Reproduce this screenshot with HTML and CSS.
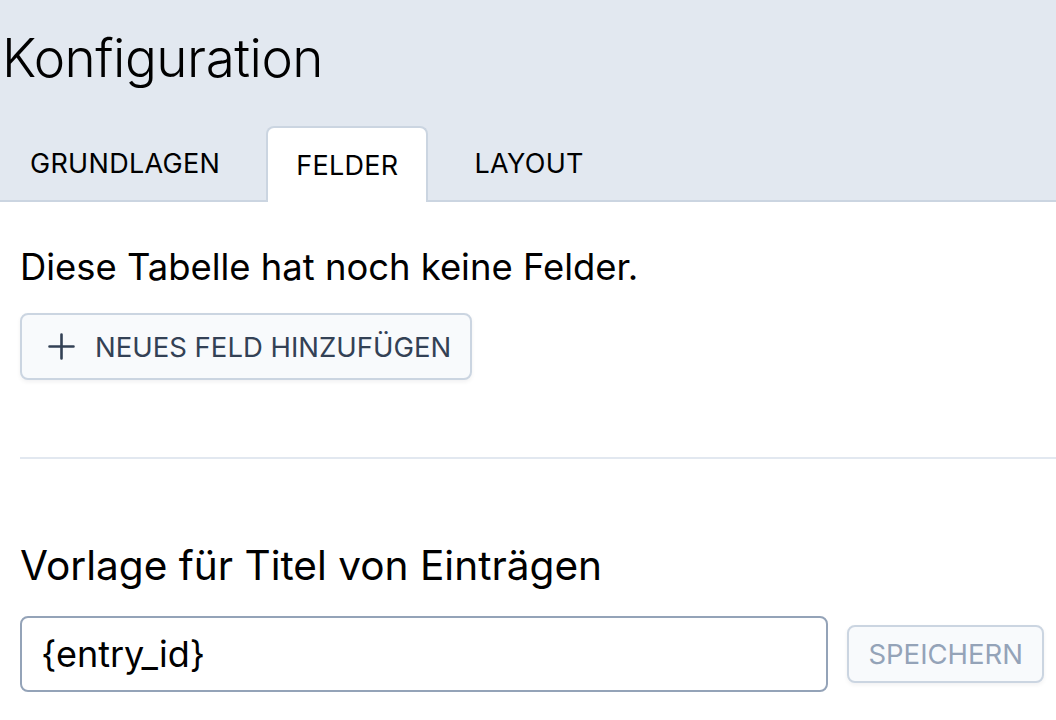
FILE: index.html
```html
<!DOCTYPE html>
<html lang="de">
<head>
<meta charset="utf-8">
<title>Konfiguration</title>
<link rel="stylesheet" href="styles.css">
</head>
<body>
<header class="header">
  <h1 class="title">Konfiguration</h1>
  <nav class="tabs">
    <div class="tab">GRUNDLAGEN</div>
    <div class="tab tab-active">FELDER</div>
    <div class="tab">LAYOUT</div>
  </nav>
</header>
<main class="content">
  <p class="empty">Diese Tabelle hat noch keine Felder.</p>
  <button class="btn btn-add" type="button">
    <svg class="plus" width="27" height="27" viewBox="0 0 27 27" aria-hidden="true">
      <path d="M13.5 1.5V25.5M1.5 13.5H25.5" stroke="#334155" stroke-width="2.6" stroke-linecap="round" fill="none"/>
    </svg>
    <span>NEUES FELD HINZUFÜGEN</span>
  </button>
  <hr class="divider">
  <h2 class="heading">Vorlage für Titel von Einträgen</h2>
  <div class="row">
    <input class="input" type="text" value="{entry_id}">
    <button class="btn btn-save" type="button" disabled>SPEICHERN</button>
  </div>
</main>
</body>
</html>
```

FILE: styles.css
```css
* { box-sizing: border-box; }

html, body {
  margin: 0;
  padding: 0;
  background: #ffffff;
  font-family: Inter, "Noto Sans", "Liberation Sans", sans-serif;
  color: #000000;
}

.header {
  background: #e2e8f0;
  border-bottom: 2px solid #cbd5e1;
  padding-top: 25px;
}

.title {
  margin: 0 0 0 2px;
  font-size: 53px;
  font-weight: 300;
  line-height: 66px;
  letter-spacing: -0.5px;
}

.tabs {
  display: flex;
  align-items: flex-end;
  gap: 16px;
  margin-top: 35px;
  height: 74px;
}

.tab {
  height: 74px;
  padding: 0 30px;
  display: flex;
  align-items: center;
  font-size: 27px;
  font-weight: 400;
  color: #000000;
  letter-spacing: 0.3px;
}

.tab-active {
  height: 76px;
  margin-bottom: -2px;
  padding: 0 28px;
  background: #ffffff;
  border: 2px solid #cbd5e1;
  border-bottom: none;
  border-radius: 8px 8px 0 0;
}

.content {
  padding: 0 0 0 20px;
}

.empty {
  margin: 38px 0 0 0;
  font-size: 36.4px;
  line-height: 54px;
}

.btn {
  font-family: Inter, "Noto Sans", "Liberation Sans", sans-serif;
  border: 2px solid #cbd5e1;
  background: #f8fafc;
  border-radius: 8px;
  box-shadow: 0 2px 4px rgba(15, 23, 42, 0.06);
  cursor: pointer;
}

.btn-add {
  margin-top: 19px;
  height: 67px;
  display: flex;
  align-items: center;
  gap: 20px;
  padding: 0 19px 0 26px;
  font-size: 27.5px;
  color: #334155;
}

.plus { display: block; flex: none; }

.divider {
  margin: 77px 0 0 0;
  border: none;
  height: 2px;
  background: #e2e8f0;
}

.heading {
  margin: 83px 0 0 0;
  font-size: 40.6px;
  font-weight: 400;
  line-height: 48px;
}

.row {
  display: flex;
  align-items: center;
  gap: 19px;
  margin-top: 26px;
  margin-right: 12px;
}

.input {
  flex: 1;
  height: 76px;
  border: 2px solid #94a3b8;
  border-radius: 8px;
  padding: 0 19px;
  font-family: Inter, "Noto Sans", "Liberation Sans", sans-serif;
  font-size: 36px;
  color: #000000;
  background: #ffffff;
  outline: none;
}

.btn-save {
  height: 58px;
  padding: 0 19px;
  font-size: 27.5px;
  color: #94a3b8;
}
```
